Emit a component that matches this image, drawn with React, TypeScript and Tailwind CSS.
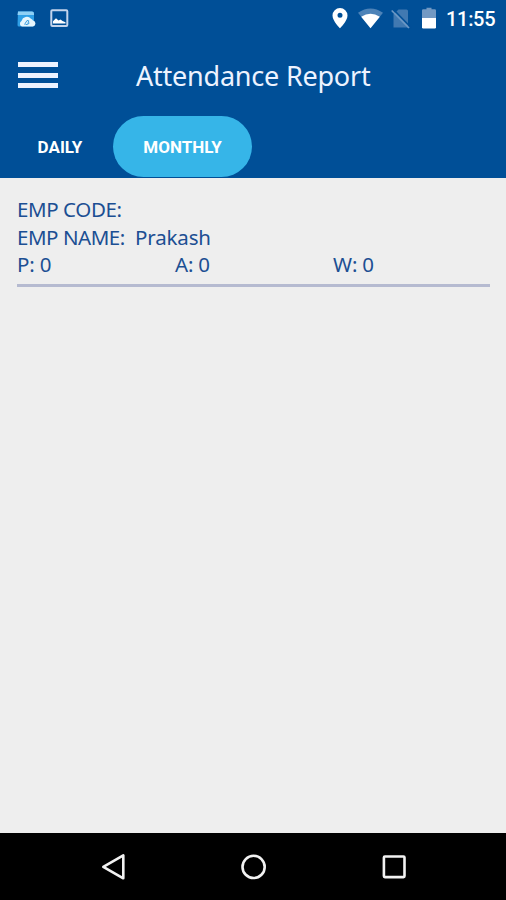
import { useState } from "react";

const summary = [
  { label: "P", value: 0 },
  { label: "A", value: 0 },
  { label: "W", value: 0 },
];

const StatusBar = () => {
  return (
    <div className="flex h-[38px] items-start">
      <svg className="ml-4 h-[38px] w-[60px]" viewBox="16 0 60 38">
        <path d="M18 11.5h14q2 0 2 2V25q0 1.500-2 1.500H19q-1.500 0-1.500-1.500z" fill="#2f9fe6" />
        <path d="M18 11.500h14q2 0 2 2v1.500H17.500z" fill="#8fd0f5" />
        <path d="M22 26.500a3 3 0 0 1-.5-5.500 5.500 5.500 0 0 1 9.500-2.200 3 3 0 0 1 2 1.800 3 3 0 0 1 0 5.900z" fill="#e6f5fd" />
        <path d="M24.500 24.500l2.500-4 1.800.3-1 3.200M25.500 24.500q2 .8 4-1.500" fill="none" stroke="#3b9ddd" strokeWidth="1" />
        <rect x="51.300" y="10.300" width="16" height="15.700" rx="1" fill="none" stroke="#c3d4ec" strokeWidth="2" />
        <path d="M53 23.500v-2.200l3-3 2.500 2.200 2-1 2 1.500 3 1.200v1.300z" fill="#fff" />
      </svg>
      <svg className="ml-auto h-[38px] w-[114px]" viewBox="326 0 114 38">
        <path
          d="M340 8a7.500 7.500 0 0 0-7.500 7.500c0 5.500 7.500 12.800 7.500 12.800s7.500-7.300 7.500-12.800A7.500 7.500 0 0 0 340 8zm0 4.700a2.500 2.500 0 1 1 0 5 2.500 2.500 0 0 1 0-5z"
          fill="#fff"
          fillRule="evenodd"
        />
        <path d="M358 12.800q12.500-8.500 25 0L370.500 28.300z" fill="#4d83b8" />
        <path d="M361.200 16.800q9.300-6.300 18.600 0L370.500 28.300z" fill="#fff" />
        <path d="M398.500 9.500h8q1.500 0 1.500 1.500v16.500h-14.500V14.500z" fill="#4179b1" />
        <path d="M393 9l18.500 19" stroke="#004f97" strokeWidth="1.500" />
        <path d="M391.700 10.500l17.300 17.500" stroke="#6c98c5" strokeWidth="1.700" />
        <path d="M426.500 7.700h5v1.500h3.300q1.200 0 1.200 1.200V19h-14v-8.600q0-1.200 1.200-1.200h3.300z" fill="#7299c3" />
        <path d="M422 18h14v9.300q0 1.200-1.200 1.200h-11.600q-1.200 0-1.200-1.200z" fill="#fff" />
      </svg>
      <span className="mt-[6px] ml-[6px] w-[60px] font-[Roboto,sans-serif] text-[20px] leading-[26px] font-medium tracking-[-0.3px] text-white">
        11:55
      </span>
    </div>
  );
};

const NavBar = () => {
  return (
    <nav className="h-[67px] bg-black">
      <svg className="h-[67px] w-full" viewBox="0 833 506 67" fill="none" stroke="#f2f2f2" strokeWidth="2.600">
        <path d="M123.300 855.300v23l-20-11.500z" strokeLinejoin="round" />
        <circle cx="253.600" cy="866.900" r="11.100" />
        <rect x="383.900" y="856.500" width="20.600" height="20.600" rx="1" />
      </svg>
    </nav>
  );
};

const App = () => {
  const [tab, setTab] = useState("MONTHLY");

  return (
    <div className="flex h-[900px] w-[506px] flex-col overflow-hidden bg-[#eeeeee]">
      <header className="h-[178px] bg-[#004f97]">
        <StatusBar />
        <div className="flex h-[76px] items-center pl-[18px]">
          <button className="flex w-[40px] flex-col gap-[5.5px] pb-[2px]" aria-label="Menu">
            <span className="h-[5px] bg-[#edf3ff]" />
            <span className="h-[5px] bg-[#edf3ff]" />
            <span className="h-[5px] bg-[#edf3ff]" />
          </button>
          <h1 className="ml-[78px] font-['Noto_Sans',sans-serif] text-[27px] leading-[36px] tracking-[-0.22px] whitespace-nowrap text-[#edf3ff]">
            Attendance Report
          </h1>
        </div>
        <div className="flex h-[64px] items-start pt-[2px] pl-[7px] font-[Roboto,sans-serif] text-[17px] font-bold text-white">
          <button
            onClick={() => setTab("DAILY")}
            className={`h-[60.5px] w-[106px] rounded-full pt-[2px] ${tab === "DAILY" ? "bg-[#36b5e8]" : ""}`}
          >
            DAILY
          </button>
          <button
            onClick={() => setTab("MONTHLY")}
            className={`h-[60.5px] w-[139px] rounded-full pt-[2px] ${tab === "MONTHLY" ? "bg-[#36b5e8]" : ""}`}
          >
            MONTHLY
          </button>
        </div>
      </header>

      <main className="flex-1 px-[17px] pt-[18px] font-['Noto_Sans',sans-serif] text-[20.5px] leading-[27.5px] text-[#1c4f93]">
        <p className="tracking-[-0.4px]">EMP CODE:</p>
        <div className="flex">
          <p className="w-[118px] tracking-[-0.45px]">EMP NAME:</p>
          <p className="tracking-[-0.15px]">Prakash</p>
        </div>
        <div className="grid grid-cols-[158px_158px_1fr]">
          {summary.map((item) => (
            <p key={item.label} className="tracking-[-0.2px]">
              {item.label}: {item.value}
            </p>
          ))}
        </div>
        <hr className="mt-[5px] mr-[-1px] border-t-[3px] border-[#b5bad0]" />
      </main>

      <NavBar />
    </div>
  );
};

export default App;
